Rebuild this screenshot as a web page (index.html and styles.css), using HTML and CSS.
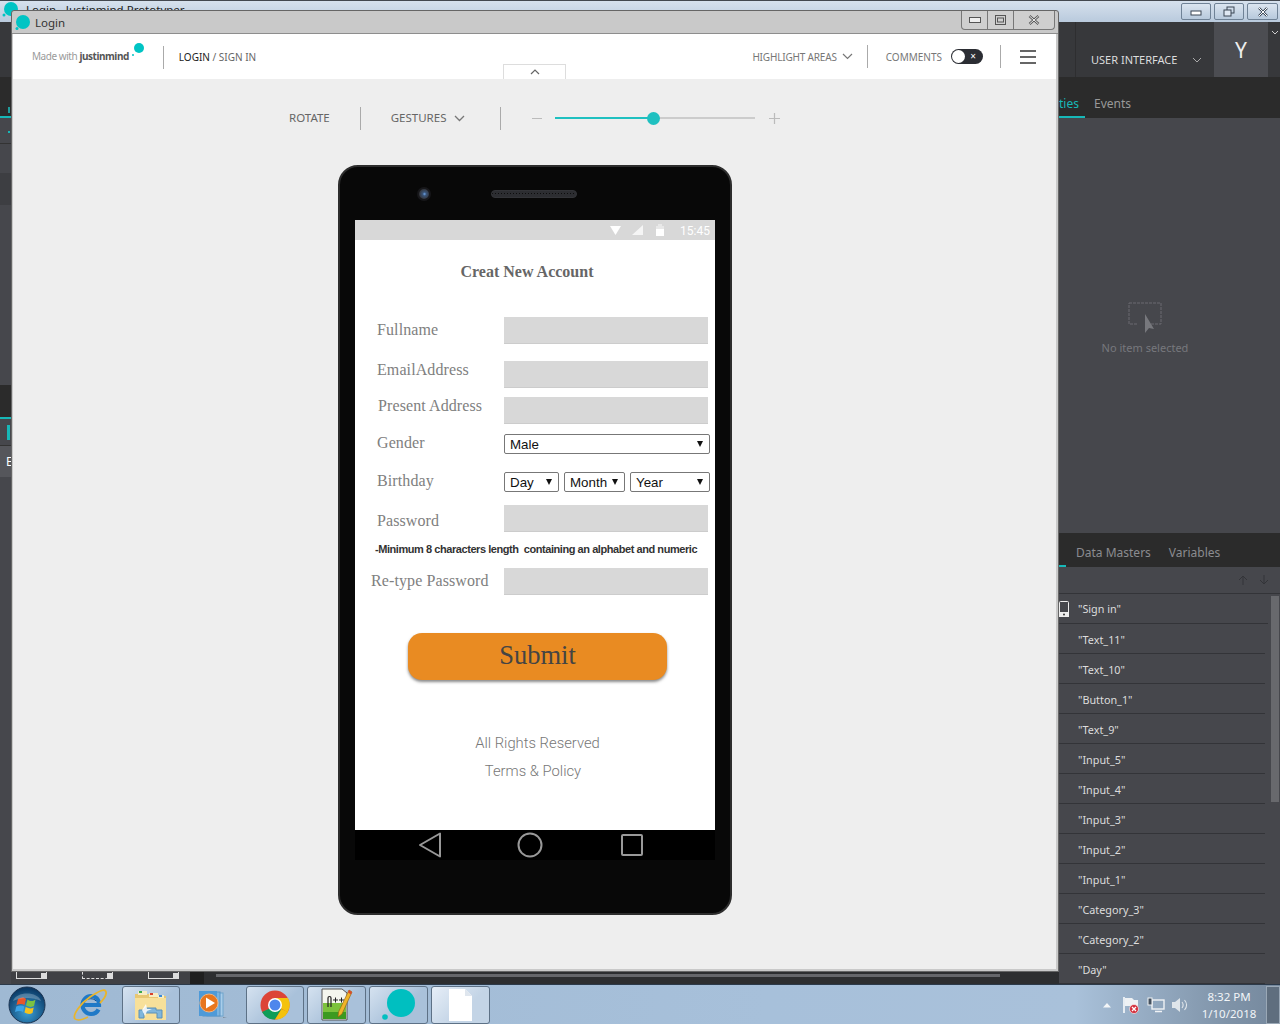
FILE: index.html
```html
<!DOCTYPE html>
<html lang="en">
<head>
    <meta charset="UTF-8">
    <meta name="viewport" content="width=device-width, initial-scale=1.0">
    <title>Login - Justinmind Prototyper</title>
    <link rel="stylesheet" href="styles.css">
</head>
<body>
<div class="desktop">

    <!-- Main app behind the simulator -->
    <div class="app">
        <div class="app-title">
            <svg class="app-logo" width="22" height="22" viewBox="0 0 22 22"><circle cx="11" cy="10" r="7" fill="#00c4c4"/><circle cx="4" cy="16" r="1.5" fill="#00c4c4"/></svg>
            <span class="app-name">Login - Justinmind Prototyper</span>
            <div class="app-controls">
                <div class="app-btn"><svg width="14" height="10" viewBox="0 0 14 10"><rect x="2" y="4" width="10" height="4" fill="#fff" stroke="#3a4654"/></svg></div>
                <div class="app-btn"><svg width="14" height="12" viewBox="0 0 14 12"><rect x="5" y="1" width="7" height="6" fill="none" stroke="#3a4654"/><rect x="2" y="4" width="7" height="6" fill="#dfe8f3" stroke="#3a4654"/></svg></div>
                <div class="app-btn"><svg width="14" height="12" viewBox="0 0 14 12"><path d="M3 2l8 8M11 2l-8 8" stroke="#3a4654" stroke-width="2.4"/><path d="M3 2l8 8M11 2l-8 8" stroke="#fff" stroke-width="1"/></svg></div>
            </div>
        </div>
        <div class="app-main">
            <div class="left-strip">
                <div class="strip-top"></div>
                <div class="strip-a"><span class="strip-bit"></span></div>
                <div class="strip-teal"></div>
                <div class="strip-b"><span class="strip-dot"></span></div>
                <div class="strip-c"></div>
                <div class="strip-d"></div>
                <div class="strip-a strip-a2"></div>
                <div class="strip-teal"></div>
                <div class="strip-e"><span class="strip-mark"></span></div>
                <div class="strip-f">E</div>
                <div class="strip-g"></div>
            </div>
            <div class="center-pane">
                <div class="center-foot">
                    <span class="ruler-box r1"></span>
                    <span class="ruler-box r2"></span>
                    <span class="ruler-box r3"></span>
                    <span class="foot-dark"></span>
                    <span class="foot-scroll"></span>
                </div>
            </div>
            <div class="right-pane">
                <div class="top-tools">
                    <div class="tool-label">USER INTERFACE
                        <svg width="10" height="6" viewBox="0 0 10 6"><path d="M1 1l4 4 4-4" fill="none" stroke="#aaa"/></svg>
                    </div>
                    <div class="user-tile">Y</div>
                    <svg class="user-chevron" width="8" height="5" viewBox="0 0 8 5"><path d="M1 1l3 3 3-3" fill="none" stroke="#ccc"/></svg>
                </div>
                <div class="tabs props-tabs">
                    <span class="tab tab-on">ties</span>
                    <span class="tab">Events</span>
                </div>
                <div class="props-body">
                    <svg width="34" height="32" viewBox="0 0 34 32"><path d="M1 1h32v21h-12M9 22H1V1" fill="none" stroke="#6a6b70" stroke-dasharray="3 1"/><path d="M17 12v19l4-5 5 1z" fill="#77787d"/></svg>
                    <p class="no-item">No item selected</p>
                </div>
                <div class="tabs data-tabs">
                    <span class="data-mark"></span>
                    <span class="tab">Data Masters</span>
                    <span class="tab">Variables</span>
                </div>
                <div class="list-tools">
                    <svg width="12" height="12" viewBox="0 0 12 12"><path d="M6 11V2M2 6l4-4 4 4" fill="none" stroke="#333438"/></svg>
                    <svg width="12" height="12" viewBox="0 0 12 12"><path d="M6 1v9M2 6l4 4 4-4" fill="none" stroke="#333438"/></svg>
                </div>
                <div class="list-wrap">
                    <ul class="screen-list">
                        <li class="first-row">
                            <svg class="row-icon" width="10" height="16" viewBox="0 0 10 16"><rect x="0.5" y="0.5" width="9" height="15" rx="1" fill="none" stroke="#eee"/><rect x="0" y="11" width="10" height="5" fill="#eee"/><circle cx="5" cy="13.5" r="1" fill="#333"/></svg>
                            "Sign in"
                        </li>
                        <li>"Text_11"</li>
                        <li>"Text_10"</li>
                        <li>"Button_1"</li>
                        <li>"Text_9"</li>
                        <li>"Input_5"</li>
                        <li>"Input_4"</li>
                        <li>"Input_3"</li>
                        <li>"Input_2"</li>
                        <li>"Input_1"</li>
                        <li>"Category_3"</li>
                        <li>"Category_2"</li>
                        <li>"Day"</li>
                    </ul>
                    <div class="list-scroll"><div class="list-thumb"></div></div>
                </div>
            </div>
        </div>

        <!-- Taskbar -->
        <div class="taskbar">
            <svg class="orb" width="38" height="38" viewBox="0 0 38 38">
                <defs>
                    <radialGradient id="orbFill" cx="50%" cy="70%" r="65%"><stop offset="0" stop-color="#3aa0d8"/><stop offset="1" stop-color="#0b3a66"/></radialGradient>
                </defs>
                <circle cx="19" cy="19" r="18" fill="url(#orbFill)" stroke="#1c3350"/>
                <path d="M10 13c3-2 6-2 8 0l-1.500 6c-2-1.500-5-1.500-8 0z" fill="#e8562a"/>
                <path d="M19.500 13.500c3 2 5 2 8 0L26 20c-3 1.500-5 1-8-.5z" fill="#7cc242"/>
                <path d="M8.300 20.500c3-1.500 6-1.500 8 0L15 26c-2-1.500-5-1.500-8 0z" fill="#3ba4e8"/>
                <path d="M17.700 21c3 1.500 5 2 8 .5L24.500 27c-3 1.500-5 1-8-.5z" fill="#f6c21c"/>
                <path d="M5 15C8 5 30 5 33 15c-8-4-20-4-28 0z" fill="#fff" opacity=".25"/>
            </svg>
            <svg class="ie" width="34" height="32" viewBox="0 0 34 32">
                <path d="M10 16h16c0-6-3.500-9-8-9s-8.500 4-8.500 9 4 9 8.500 9c3.500 0 6-1.500 7.500-4.500" fill="none" stroke="#1f79c7" stroke-width="4.200"/>
                <path d="M13 12c1-3 8-3 10 0" fill="none" stroke="#0e4f92" stroke-width="1"/>
                <path d="M2 30C-1 26 8 14 17 8S32-1 33 3s-3 8-6 11" fill="none" stroke="#e9b52c" stroke-width="1.800"/>
                <path d="M2 30c3 2 9 0 13-2" fill="none" stroke="#e9b52c" stroke-width="1.500"/>
            </svg>
            <div class="task-btn folder-btn">
                <svg width="34" height="32" viewBox="0 0 34 32">
                    <path d="M1 5h14l2 2h15v24H1z" fill="#e8c772"/>
                    <rect x="4" y="2" width="9" height="4" fill="#f6ecc4"/><rect x="5" y="2" width="3" height="2" fill="#3aa84a"/>
                    <rect x="15" y="4" width="9" height="4" fill="#f6ecc4"/><rect x="16" y="4" width="3" height="2" fill="#d8402c"/>
                    <rect x="24" y="6" width="6" height="3" fill="#f6ecc4"/><rect x="25" y="6" width="3" height="2" fill="#3a8ad8"/>
                    <rect x="1" y="9" width="31" height="22" fill="#f7e09a"/>
                    <path d="M5 29V21h6v-2h11v2h6v8h-5v-5h-13v5z" fill="#7fb6dc" stroke="#5a90b8"/>
                    <path d="M8 21L12 15 13 20 18 20 13 22 11 27z" fill="#fff" opacity=".85"/>
                </svg>
            </div>
            <div class="task-plain">
                <svg width="30" height="30" viewBox="0 0 30 30">
                    <rect x="9" y="3" width="16" height="23" fill="#a8cdea" stroke="#6ea4cc"/>
                    <rect x="5" y="2" width="17" height="24" fill="#7ab4e0" stroke="#5a94c4"/>
                    <rect x="1" y="1" width="18" height="25" fill="#4e9ad8"/>
                    <circle cx="11" cy="13" r="9" fill="#e8761e" stroke="#f6b27a"/>
                    <path d="M8 7.500l9 5.500-9 5.500z" fill="#fff"/>
                    <path d="M25 27l4 0-4 1z" fill="#7a8a9a"/>
                </svg>
            </div>
            <div class="task-btn">
                <svg width="30" height="30" viewBox="0 0 30 30">
                    <circle cx="15" cy="15" r="14.500" fill="#dc4437"/>
                    <path d="M15 8h13a14.500 14.500 0 0 1-.4 14.300L15 15z" fill="#f4c20d"/>
                    <path d="M2 22A14.500 14.500 0 0 0 15 29.500L21.500 19 15 15 8.500 19z" fill="#0f9d58"/>
                    <path d="M15 29.500A14.500 14.500 0 0 0 28 22L21.500 19z" fill="#f4c20d"/>
                    <circle cx="15" cy="15" r="7" fill="#fff"/>
                    <circle cx="15" cy="15" r="5.500" fill="#4e86ec"/>
                </svg>
            </div>
            <div class="task-btn">
                <svg width="32" height="34" viewBox="0 0 32 34">
                    <path d="M1 1h20l5 4v27H1z" fill="#f4f6ee" stroke="#555"/>
                    <rect x="2" y="15" width="23" height="16" fill="#7cc23c"/>
                    <rect x="2" y="24" width="23" height="7" fill="#3c9a20"/>
                    <path d="M7 19V10c0-2 3-2 3 0v9" fill="none" stroke="#222" stroke-width="1.200"/>
                    <path d="M12 12h5M14.500 9.500v5M18 12h5M20.500 9.500v5" stroke="#222" stroke-width="1"/>
                    <path d="M28 2l3 2-10 22-4 3 .5-5z" fill="#f0b428" stroke="#8a5a10" stroke-width=".6"/>
                    <path d="M28 2l3 2-1 2.500-3-2z" fill="#d84c2c"/>
                </svg>
            </div>
            <div class="task-btn jm-btn">
                <svg width="34" height="34" viewBox="0 0 34 34"><circle cx="19" cy="15" r="14" fill="#00bfc0"/><circle cx="3" cy="29" r="2.800" fill="#00bfc0"/></svg>
            </div>
            <div class="task-btn doc-btn">
                <svg width="26" height="32" viewBox="0 0 26 32"><path d="M1 0h16l7 7v25H1z" fill="#fff"/><path d="M17 0l7 7h-7z" fill="#dfe6ee"/></svg>
            </div>
            <div class="tray">
                <svg width="10" height="6" viewBox="0 0 10 6"><path d="M1 5.500L5 1l4 4.500z" fill="#f4f6f8"/></svg>
                <svg class="tray-flag" width="18" height="18" viewBox="0 0 18 18">
                    <path d="M2 1v16" stroke="#fff" stroke-width="1.500"/><path d="M3 2h7l2 2h4v6H3z" fill="#eef1f4"/>
                    <circle cx="12" cy="13" r="4.500" fill="#d32f3c" stroke="#fff" stroke-width=".6"/><path d="M10 11l4 4M14 11l-4 4" stroke="#fff" stroke-width="1.300"/>
                </svg>
                <svg class="tray-net" width="18" height="16" viewBox="0 0 18 16">
                    <rect x="5" y="3" width="12" height="9" fill="none" stroke="#f0f3f6" stroke-width="1.400"/>
                    <path d="M8 14.500h7" stroke="#f0f3f6" stroke-width="1.500"/>
                    <rect x="1" y="1" width="4" height="7" fill="#44505e" stroke="#f0f3f6"/>
                </svg>
                <svg class="tray-sound" width="17" height="16" viewBox="0 0 17 16">
                    <path d="M1 5h3l5-4v14l-5-4H1z" fill="#dfe5ea"/>
                    <path d="M11 5c1.500 2 1.500 4 0 6M13.500 3c2.500 3 2.500 7 0 10" fill="none" stroke="#dfe5ea" stroke-width="1.100"/>
                </svg>
            </div>
            <div class="clock"><div>8:32 PM</div><div>1/10/2018</div></div>
            <div class="show-desktop"></div>
        </div>
    </div>

    <!-- Simulator window -->
    <div class="sim">
        <div class="sim-title">
            <svg width="18" height="18" viewBox="0 0 18 18"><circle cx="10" cy="9" r="7" fill="#00c4c4"/><circle cx="4" cy="15.500" r="1.500" fill="#00c4c4"/></svg>
            <span class="sim-name">Login</span>
            <div class="sim-controls">
                <div class="sim-btn sim-min"><svg width="12" height="6" viewBox="0 0 12 6"><rect x="0.500" y="0.500" width="11" height="5" fill="#eee" stroke="#555"/></svg></div>
                <div class="sim-btn sim-max"><svg width="11" height="10" viewBox="0 0 11 10"><rect x="0.500" y="0.500" width="10" height="9" fill="none" stroke="#555"/><rect x="2.500" y="3" width="6" height="4" fill="none" stroke="#555"/></svg></div>
                <div class="sim-btn sim-close"><svg width="12" height="10" viewBox="0 0 12 10"><path d="M1.500 1l9 8M10.500 1l-9 8" stroke="#555" stroke-width="2.400"/><path d="M1.500 1l9 8M10.500 1l-9 8" stroke="#eee" stroke-width="1"/></svg></div>
            </div>
        </div>
        <div class="sim-body">
            <div class="sim-head">
                <div class="made-with">Made with <b>justinmind</b>
                    <svg width="16" height="16" viewBox="0 0 16 16"><circle cx="10" cy="6" r="5" fill="#00c4c4"/><circle cx="4" cy="13" r="1" fill="#00c4c4"/></svg>
                </div>
                <div class="head-sep sep-left"></div>
                <div class="crumb"><b>LOGIN</b> / SIGN IN</div>
                <div class="collapse-tab"><svg width="10" height="6" viewBox="0 0 10 6"><path d="M1 5l4-4 4 4" fill="none" stroke="#666" stroke-width="1.200"/></svg></div>
                <div class="head-right">
                    <span class="head-link">HIGHLIGHT AREAS</span>
                    <svg class="head-chevron" width="11" height="7" viewBox="0 0 11 7"><path d="M1 1l4.500 4.500L10 1" fill="none" stroke="#777" stroke-width="1.200"/></svg>
                    <div class="head-sep sep-b"></div>
                    <span class="head-link">COMMENTS</span>
                    <div class="toggle"><span class="toggle-knob"></span><span class="toggle-x">×</span></div>
                    <div class="head-sep sep-c"></div>
                    <div class="burger"><span></span><span></span><span></span></div>
                </div>
            </div>

            <div class="sim-tools">
                <span class="tool-text">ROTATE</span>
                <div class="tool-sep sep-1"></div>
                <span class="tool-text">GESTURES</span>
                <svg class="tool-chevron" width="11" height="7" viewBox="0 0 11 7"><path d="M1 1l4.500 4.500L10 1" fill="none" stroke="#777" stroke-width="1.300"/></svg>
                <div class="tool-sep sep-2"></div>
                <span class="zoom-minus"></span>
                <div class="zoom-track">
                    <div class="zoom-fill" style="width: 98px"></div>
                    <div class="zoom-thumb"></div>
                </div>
                <svg class="zoom-plus" width="11" height="11" viewBox="0 0 11 11"><path d="M5.500 0v11M0 5.500h11" stroke="#bbb" stroke-width="1.200"/></svg>
            </div>

            <div class="phone">
                <div class="phone-top">
                    <span class="camera"></span>
                    <span class="speaker"></span>
                </div>
                <div class="screen">
                    <div class="status-bar">
                        <svg width="11" height="9" viewBox="0 0 11 9"><path d="M0 0h11L5.500 9z" fill="#fff"/></svg>
                        <svg class="sig" width="11" height="10" viewBox="0 0 11 10"><path d="M0 10L11 0v10z" fill="#fff" opacity=".75"/></svg>
                        <svg class="bat" width="8" height="12" viewBox="0 0 8 12"><path d="M2 0h4v2h2v10H0V2h2z" fill="#e8e8e8"/><rect y="5" width="8" height="7" fill="#fff"/></svg>
                        <span class="status-time">15:45</span>
                    </div>
                    <h1 class="form-title">Creat New Account</h1>
                    <div class="field f1"><label>Fullname</label><div class="input"></div></div>
                    <div class="field f2"><label class="lift">EmailAddress</label><div class="input"></div></div>
                    <div class="field f3"><label class="lift shift">Present Address</label><div class="input"></div></div>
                    <div class="field f4"><label>Gender</label><div class="select wide">Male</div></div>
                    <div class="field f5"><label>Birthday</label>
                        <div class="select s-day">Day</div>
                        <div class="select s-month">Month</div>
                        <div class="select s-year">Year</div>
                    </div>
                    <div class="field f6"><label class="drop">Password</label><div class="input"></div></div>
                    <p class="hint">-Minimum 8 characters length&nbsp; containing an alphabet and numeric</p>
                    <div class="field f7"><label class="wide-label">Re-type Password</label><div class="input"></div></div>
                    <div class="submit">Submit</div>
                    <p class="foot-a">All Rights Reserved</p>
                    <p class="foot-b">Terms &amp; Policy</p>
                </div>
                <div class="nav-bar">
                    <svg width="24" height="26" viewBox="0 0 24 26"><path d="M22 1.500v23L2 13z" fill="none" stroke="#999" stroke-width="2" stroke-linejoin="round"/></svg>
                    <svg width="26" height="26" viewBox="0 0 26 26"><circle cx="13" cy="13" r="11.500" fill="none" stroke="#999" stroke-width="2"/></svg>
                    <svg width="24" height="24" viewBox="0 0 24 24"><rect x="2" y="2" width="20" height="20" rx="1" fill="none" stroke="#999" stroke-width="2"/></svg>
                </div>
            </div>
        </div>
    </div>
</div>
</body>
</html>
```

FILE: styles.css
```css
html, body {
    margin: 0;
    padding: 0;
}
body {
    width: 1280px;
    height: 1024px;
    overflow: hidden;
    font-family: "Noto Sans", sans-serif;
}
.desktop {
    position: relative;
    width: 1280px;
    height: 1024px;
    overflow: hidden;
}

/* Main app */
.app {
    display: flex;
    flex-direction: column;
    height: 1024px;
    background: #46474c;
}
.app-title {
    display: flex;
    align-items: center;
    height: 21px;
    border-top: 1px solid #43484f;
    background: linear-gradient(#d6e1ed, #b9cadd);
}
.app-logo {
    margin: -4px 0 0 0;
}
.app-name {
    margin: -4px 0 0 4px;
    font-size: 11.5px;
    color: #222;
}
.app-controls {
    display: flex;
    gap: 3px;
    margin-left: auto;
    margin-right: 2px;
}
.app-btn {
    display: flex;
    align-items: center;
    justify-content: center;
    width: 30px;
    height: 17px;
    box-sizing: border-box;
    border: 1px solid #6f8296;
    border-radius: 2px;
    background: linear-gradient(#dbe5f0, #b7c9dc);
}
.app-btn:last-child {
    width: 31px;
}
.app-main {
    display: flex;
    flex: 1;
    min-height: 0;
}
.left-strip {
    display: flex;
    flex-direction: column;
    width: 11px;
    flex-shrink: 0;
}
.strip-top {
    height: 55px;
    background: #37383b;
}
.strip-a {
    height: 39px;
    padding-top: 30px;
    box-sizing: border-box;
    background: #2b2b2b;
}
.strip-bit {
    display: block;
    width: 2px;
    height: 6px;
    margin-left: 8px;
    background: #1f9c9c;
}
.strip-teal {
    height: 2px;
    background: #17b8b8;
}
.strip-b {
    height: 26px;
    padding-top: 13px;
    box-sizing: border-box;
    border-bottom: 1px solid #333;
    background: #46474c;
}
.strip-dot {
    display: block;
    width: 2px;
    height: 2px;
    margin-left: 8px;
    background: #17b8b8;
}
.strip-c {
    height: 29px;
    background: #46474c;
}
.strip-d {
    height: 32px;
    background: #3d3e42;
}
.strip-a2 {
    height: 32px;
    padding: 0;
    margin-top: 180px;
}
.strip-e {
    height: 26px;
    border-bottom: 1px solid #333;
}
.strip-mark {
    display: block;
    width: 3px;
    height: 15px;
    margin: 6px 0 0 7px;
    background: #17b8b8;
}
.strip-f {
    height: 31px;
    padding-left: 6px;
    background: #55565b;
    color: #fff;
    font-size: 12px;
    line-height: 31px;
}
.strip-g {
    flex: 1;
}
.center-pane {
    display: flex;
    flex: 1;
    flex-direction: column;
    justify-content: flex-end;
    background: #46474c;
}
.center-foot {
    display: flex;
    height: 12px;
    background: linear-gradient(90deg, #404145 179px, #2d2e30 179px);
}
.ruler-box {
    position: relative;
    display: block;
    width: 31px;
    height: 7px;
    box-sizing: border-box;
    border: solid #ddd;
    border-width: 0 1px 1px 1px;
}
.ruler-box::after {
    content: "";
    position: absolute;
    right: -1px;
    top: 1px;
    width: 6px;
    height: 6px;
    background: #ddd;
}
.r1 {
    margin-left: 5px;
}
.r2 {
    margin-left: 35px;
    border-left-style: dashed;
    border-bottom-style: dashed;
}
.r3 {
    margin-left: 35px;
}
.foot-dark {
    width: 14px;
    margin-left: 11px;
    background: #1f1f1f;
}
.foot-scroll {
    width: 784px;
    height: 3px;
    margin: 2px 0 0 12px;
    background: #66676b;
}
.right-pane {
    display: flex;
    flex-direction: column;
    width: 221px;
    flex-shrink: 0;
    background: #46474c;
}
.top-tools {
    position: relative;
    display: flex;
    height: 55px;
    background: #37383b;
}
.tool-label {
    display: flex;
    align-items: center;
    justify-content: space-between;
    flex-shrink: 0;
    width: 111px;
    height: 35px;
    margin-left: 16px;
    padding: 20px 0 0 15px;
    border-left: 1px solid #2e2e30;
    color: #ddd;
    font-size: 11px;
    white-space: nowrap;
}
.user-tile {
    width: 54px;
    margin-left: 12px;
    padding-top: 14px;
    box-sizing: border-box;
    background: #4c4d52;
    color: #eee;
    font-size: 21px;
    line-height: 28px;
    text-align: center;
}
.user-chevron {
    margin: 8px 0 0 3px;
}
.tabs {
    display: flex;
    background: #2b2b2b;
    color: #999;
    font-size: 12px;
}
.props-tabs {
    height: 41px;
    box-sizing: border-box;
    padding-top: 18px;
    gap: 9px;
    line-height: 18px;
}
.tab-on {
    width: 26px;
    height: 23px;
    box-sizing: border-box;
    padding-right: 10px;
    border-bottom: 2px solid #17b8b8;
    color: #17b8b8;
    text-align: right;
}
.props-body {
    display: flex;
    flex-direction: column;
    align-items: center;
    height: 415px;
    padding: 184px 49px 0 0;
    box-sizing: border-box;
}
.no-item {
    margin: 6px 0 0;
    color: #77787d;
    font-size: 11px;
    white-space: nowrap;
}
.data-tabs {
    position: relative;
    height: 34px;
    padding-left: 17px;
    gap: 18px;
    line-height: 39px;
    color: #8b8c90;
}
.data-mark {
    position: absolute;
    left: 0;
    bottom: 0;
    width: 7px;
    height: 2px;
    background: #17b8b8;
}
.list-tools {
    display: flex;
    justify-content: flex-end;
    align-items: center;
    gap: 9px;
    height: 26px;
    padding-right: 10px;
    border-bottom: 1px solid #333438;
}
.list-wrap {
    display: flex;
    flex: 1;
    min-height: 0;
}
.screen-list {
    flex: 1;
    margin: 0;
    padding: 0;
    list-style: none;
    color: #ddd;
    font-size: 10.8px;
}
.screen-list li {
    height: 29px;
    margin-right: 6px;
    padding-left: 19px;
    border-bottom: 1px solid #333438;
    line-height: 32px;
}
.screen-list .first-row {
    position: relative;
    margin-right: 3px;
    line-height: 30px;
}
.row-icon {
    position: absolute;
    left: 0;
    top: 7px;
}
.list-scroll {
    width: 9px;
    padding-top: 2px;
    background: #46474c;
}
.list-thumb {
    height: 206px;
    margin-right: 1px;
    background: #68696d;
}

/* Taskbar */
.taskbar {
    display: flex;
    align-items: center;
    flex-shrink: 0;
    height: 40px;
    border-top: 1px solid #2c3a4a;
    box-sizing: border-box;
    background: linear-gradient(90deg, #9fb9d3 0%, #a7c0da 60%, #a9c1da 84%, #7f93a8 96%, #75889d 100%);
}
.orb {
    margin-left: 8px;
    flex-shrink: 0;
}
.ie {
    margin-left: 27px;
    flex-shrink: 0;
}
.task-btn {
    display: flex;
    align-items: center;
    justify-content: center;
    flex-shrink: 0;
    width: 58px;
    height: 38px;
    margin-top: 1px;
    box-sizing: border-box;
    border: 1px solid #5d7186;
    border-radius: 3px;
    background: linear-gradient(135deg, #d5e2f0, #a9c1da 60%);
}
.folder-btn {
    margin-left: 15px;
}
.task-plain {
    display: flex;
    justify-content: center;
    width: 66px;
}
.task-btn + .task-btn {
    margin-left: 3px;
    width: 59px;
}
.doc-btn {
    background: linear-gradient(135deg, #e6eef7, #c3d4e6 60%);
}
.tray {
    display: flex;
    align-items: center;
    margin-left: auto;
}
.tray-flag {
    margin-left: 10px;
}
.tray-net {
    margin-left: 7px;
}
.tray-sound {
    margin-left: 6px;
}
.clock {
    width: 60px;
    margin-left: 11px;
    color: #f2f5f8;
    font-size: 11.5px;
    line-height: 17px;
    text-align: center;
}
.show-desktop {
    width: 14px;
    height: 38px;
    margin-left: 7px;
    border: 1px solid #9aa8b6;
    box-sizing: border-box;
    background: #5f6e7e;
}

/* Simulator window */
.sim {
    position: absolute;
    left: 11px;
    top: 10px;
    display: flex;
    flex-direction: column;
    width: 1048px;
    height: 962px;
    box-sizing: border-box;
    border: 1px solid #666;
    border-radius: 3px 3px 0 0;
    background: #c9c9c9;
}
.sim-title {
    position: relative;
    display: flex;
    align-items: center;
    height: 22px;
    padding-left: 1px;
    border-bottom: 1px solid #8d8d8d;
    flex-shrink: 0;
}
.sim-name {
    margin-left: 4px;
    color: #333;
    font-size: 11.5px;
}
.sim-controls {
    position: absolute;
    right: 3px;
    top: 0;
    display: flex;
    height: 18px;
    border: solid #777;
    border-width: 0 1px 1px 1px;
    border-radius: 0 0 4px 4px;
    background: #cfcfcf;
}
.sim-btn {
    display: flex;
    align-items: center;
    justify-content: center;
    height: 18px;
}
.sim-min {
    width: 25px;
}
.sim-max {
    width: 25px;
    border-left: 1px solid #777;
    border-right: 1px solid #777;
}
.sim-close {
    width: 40px;
}
.sim-body {
    flex: 1;
    min-height: 0;
    margin: 0 2px 2px 1px;
    background: #eeeeee;
}
.sim-head {
    position: relative;
    display: flex;
    align-items: center;
    height: 45px;
    background: #fff;
}
.made-with {
    display: flex;
    align-items: center;
    margin: 0 0 2px 19px;
    color: #9a9a9a;
    font-size: 10px;
    letter-spacing: -0.45px;
    white-space: pre;
}
.made-with b {
    color: #555;
}
.made-with svg {
    margin: -11px 0 0 0;
}
.head-sep {
    width: 1px;
    height: 23px;
    background: #aaa;
}
.sep-left {
    margin-left: 18px;
    margin-top: 1px;
}
.crumb {
    margin-left: 15px;
    color: #666;
    font-size: 10px;
}
.crumb b {
    color: #222;
    font-weight: 400;
}
.collapse-tab {
    position: absolute;
    left: 490px;
    bottom: 0;
    display: flex;
    justify-content: center;
    align-items: center;
    width: 63px;
    height: 15px;
    box-sizing: border-box;
    border: solid #ddd;
    border-width: 1px 1px 0 1px;
    background: #fff;
}
.head-right {
    display: flex;
    align-items: center;
    margin-left: auto;
    margin-right: 20px;
}
.head-link {
    color: #777;
    font-size: 10px;
}
.head-link:first-child {
    letter-spacing: -0.18px;
}
.head-chevron {
    margin-left: 5px;
}
.sep-b {
    margin: 0 18px 0 14px;
}
.toggle {
    display: flex;
    align-items: center;
    justify-content: space-between;
    width: 32px;
    height: 15px;
    margin-left: 9px;
    padding: 0 7px 0 1px;
    box-sizing: border-box;
    border-radius: 8px;
    background: #2b2d33;
}
.toggle-knob {
    width: 13px;
    height: 13px;
    border-radius: 50%;
    background: #fff;
}
.toggle-x {
    color: #fff;
    font-size: 10px;
    line-height: 13px;
}
.sep-c {
    margin: 0 19px 0 17px;
}
.burger {
    display: flex;
    flex-direction: column;
    gap: 4px;
    width: 16px;
}
.burger span {
    height: 2px;
    background: #666;
}
.sim-tools {
    display: flex;
    align-items: center;
    height: 22px;
    margin-top: 28px;
    padding-left: 276px;
}
.tool-text {
    margin-bottom: 2px;
    color: #666;
    font-size: 11.5px;
}
.tool-sep {
    width: 1px;
    height: 23px;
    background: #aaa;
}
.sep-1 {
    margin: 0 30px;
}
.tool-chevron {
    margin-left: 8px;
}
.sep-2 {
    margin-left: 35px;
}
.zoom-minus {
    width: 10px;
    height: 1px;
    margin-left: 31px;
    background: #bbb;
}
.zoom-track {
    position: relative;
    width: 200px;
    height: 2px;
    margin-left: 13px;
    background: #ccc;
}
.zoom-fill {
    height: 2px;
    background: #1fc0c0;
}
.zoom-thumb {
    position: absolute;
    left: 92px;
    top: -5.5px;
    width: 13px;
    height: 13px;
    border-radius: 50%;
    background: #1fc0c0;
}
.zoom-plus {
    margin-left: 14px;
}

/* Phone */
.phone {
    width: 394px;
    height: 750px;
    margin: 36px 0 0 325px;
    box-sizing: border-box;
    padding: 0 15px;
    border: 2px solid #2d2d2d;
    border-radius: 20px;
    background: #080808;
}
.phone-top {
    position: relative;
    height: 53px;
}
.camera {
    position: absolute;
    left: 62px;
    top: 20px;
    width: 10px;
    height: 10px;
    border: 2px solid #17171a;
    border-radius: 50%;
    background: radial-gradient(circle at 55% 50%, #6fa4e6 0, #3a5478 25%, #34353a 70%);
}
.speaker {
    position: absolute;
    left: 136px;
    top: 23px;
    width: 86px;
    height: 8px;
    box-sizing: border-box;
    border-radius: 4px;
    background: #2c2d31;
    border: 1px solid #333438;
    background-image: repeating-linear-gradient(90deg, #0c0c0c 0 1px, transparent 1px 3px);
    background-size: 100% 1px;
    background-position: 0 2px;
    background-repeat: no-repeat;
}
.screen {
    display: flex;
    flex-direction: column;
    height: 610px;
    background: #fff;
}
.status-bar {
    display: flex;
    align-items: center;
    justify-content: flex-end;
    flex-shrink: 0;
    height: 20px;
    padding-right: 5px;
    background: #d8d8d8;
}
.sig {
    margin-left: 11px;
}
.bat {
    margin-left: 13px;
}
.status-time {
    margin: 2px 0 0 16px;
    color: #fff;
    font-family: Roboto, sans-serif;
    font-size: 12px;
}
.form-title {
    margin: 23px 0 0 0;
    padding-right: 16px;
    color: #666;
    font-family: "Liberation Serif", serif;
    font-size: 16px;
    line-height: 18px;
    text-align: center;
}
.field {
    display: flex;
    align-items: center;
    flex-shrink: 0;
    height: 27px;
    padding-left: 22px;
}
.field label {
    flex-shrink: 0;
    width: 127px;
    margin-bottom: 2px;
    color: #808080;
    font-family: "Liberation Serif", serif;
    font-size: 16px;
    letter-spacing: 0.1px;
}
.f1 {
    margin-top: 36px;
}
.f2 {
    margin-top: 17px;
}
.f3 {
    margin-top: 9px;
}
.f4 {
    margin-top: 10px;
    height: 20px;
}
.f5 {
    margin-top: 18px;
    height: 20px;
}
.f6 {
    margin-top: 13px;
}
.f7 {
    margin-top: 10px;
    padding-left: 16px;
}
.field .lift {
    margin-bottom: 10px;
}
.field .drop {
    margin-top: 7px;
}
.shift {
    padding-left: 1px;
    box-sizing: border-box;
}
.field .wide-label {
    width: 133px;
}
.input {
    width: 204px;
    height: 27px;
    box-sizing: border-box;
    border-bottom: 1px solid #ccc;
    background: #d8d8d8;
}
.select {
    position: relative;
    height: 20px;
    box-sizing: border-box;
    padding-left: 5px;
    border: 1px solid #777;
    border-radius: 2px;
    background: #fff;
    color: #111;
    font-family: "Liberation Sans", sans-serif;
    font-size: 13.33px;
    line-height: 19px;
}
.select::after {
    content: "";
    position: absolute;
    right: 6px;
    top: 6px;
    border-style: solid;
    border-width: 6px 3.5px 0 3.5px;
    border-color: #111 transparent transparent transparent;
}
.wide {
    width: 206px;
}
.s-day {
    width: 55px;
}
.s-month {
    width: 61px;
    margin-left: 5px;
}
.s-year {
    width: 80px;
    margin-left: 5px;
}
.hint {
    margin: 8px 0 0 20px;
    color: #333;
    font-family: "Liberation Sans", sans-serif;
    font-size: 11px;
    font-weight: 700;
    letter-spacing: -0.44px;
    line-height: 18px;
    white-space: nowrap;
}
.submit {
    flex-shrink: 0;
    width: 259px;
    height: 47px;
    margin: 38px 0 0 53px;
    border-radius: 14px;
    background: #e98b22;
    box-shadow: 0 2px 3px rgba(60, 60, 60, 0.6);
    color: #444;
    font-family: "Liberation Serif", serif;
    font-size: 26.5px;
    line-height: 45px;
    text-align: center;
}
.foot-a, .foot-b {
    margin: 0;
    color: #777;
    font-family: Roboto, sans-serif;
    font-size: 14.8px;
    font-weight: 300;
    line-height: 20px;
    text-align: center;
}
.foot-a {
    margin-top: 53px;
    padding-left: 5px;
}
.foot-b {
    margin-top: 8px;
    padding-right: 4px;
}
.nav-bar {
    display: flex;
    align-items: center;
    height: 30px;
    padding-left: 63px;
    background: #000;
}
.nav-bar svg:nth-child(2) {
    margin-left: 75px;
}
.nav-bar svg:nth-child(3) {
    margin-left: 77px;
}
```
